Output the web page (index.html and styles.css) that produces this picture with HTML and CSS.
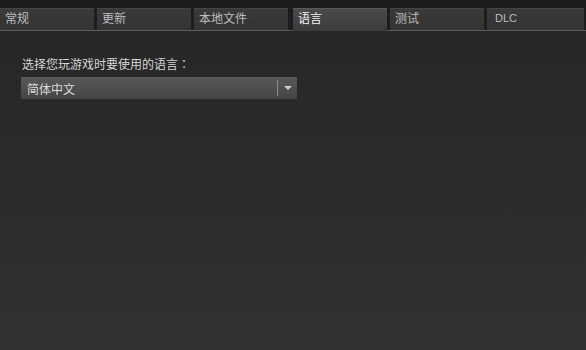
FILE: index.html
```html
<!DOCTYPE html>
<html lang="zh-CN">
<head>
  <meta charset="UTF-8" />
  <title>属性 - 语言</title>
  <link rel="stylesheet" href="styles.css">
</head>
<body>
  <div class="tab-bar">
    <div class="tab">常规</div>
    <div class="tab">更新</div>
    <div class="tab">本地文件</div>
    <div class="tab active">语言</div>
    <div class="tab">测试</div>
    <div class="tab">DLC</div>
  </div>

  <div class="panel">
    <div class="field-label">选择您玩游戏时要使用的语言<span class="colon" lang="zh-TW">：</span></div>
    <div class="dropdown">
      <span class="dropdown-value">简体中文</span>
      <span class="dropdown-sep"></span>
      <span class="dropdown-arrow"></span>
    </div>
  </div>
</body>
</html>
```

FILE: styles.css
```css
* {
  margin: 0;
  padding: 0;
  box-sizing: border-box;
}
html, body {
  height: 100%;
}
body {
  font-family: "Noto Sans CJK SC", "Liberation Sans", sans-serif;
  font-size: 12px;
  color: #c9c9c9;
  background: linear-gradient(to bottom, #262626 0%, #2c2c2c 60%, #323232 100%);
  display: flex;
  flex-direction: column;
  overflow: hidden;
}
.tab-bar {
  display: flex;
  gap: 3px;
  height: 31px;
  padding-top: 8px;
  background: #1d1d1e;
  border-bottom: 1px solid #5c5c5c;
}
.tab {
  width: 94px;
  height: 22px;
  line-height: 20px;
  padding-left: 5px;
  background: linear-gradient(to bottom, #3a3a3b, #333334);
  color: #bdbdbd;
  box-shadow: inset 0 1px 0 #444;
}
.tab:nth-child(4) {
  margin-left: 2px;
}
.tab:last-child {
  width: 97px;
  font-family: "Liberation Sans", sans-serif;
  font-size: 11px;
  padding-left: 8px;
}
.tab.active {
  height: 23px;
  background: linear-gradient(to bottom, #4a4a4b, #3c3c3d);
  color: #f2f2f2;
  box-shadow: inset 0 1px 0 #5a5a5a;
}
.panel {
  flex: 1;
  padding: 25px 21px 0;
}
.field-label {
  padding-left: 1px;
  line-height: 16px;
  color: #d6d6d6;
}
.colon {
  font-family: "Noto Sans CJK TC", sans-serif;
}
.dropdown {
  margin-top: 5px;
  width: 276px;
  height: 22px;
  display: flex;
  align-items: center;
  padding-left: 6px;
  background: linear-gradient(to bottom, #58585a, #454546);
  color: #dcdcdc;
}
.dropdown-value {
  flex: 1;
}
.dropdown-sep {
  width: 1px;
  height: 16px;
  background: #8a8a8a;
}
.dropdown-arrow {
  width: 19px;
  display: flex;
  justify-content: center;
}
.dropdown-arrow::before {
  content: "";
  border-left: 4px solid transparent;
  border-right: 4px solid transparent;
  border-top: 4px solid #cfcfcf;
}
```
